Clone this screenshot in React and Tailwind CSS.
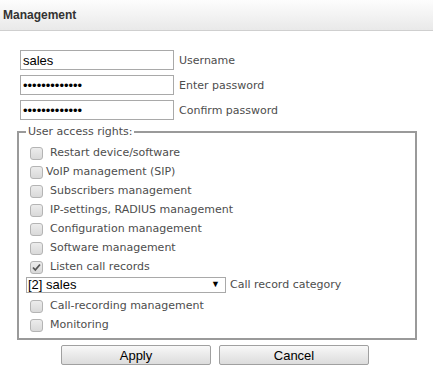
import React from "react";

const Box = ({ checked }) => (
  <span className="relative inline-block w-[13px] h-[13px] shrink-0 rounded-[3px] border border-[#b4b4b4] bg-gradient-to-b from-[#ececec] to-[#d9d9d9]">
    {checked && (
      <svg viewBox="0 0 13 13" className="absolute -left-px -top-px w-[13px] h-[13px]">
        <path d="M3 6.5 L5.3 9 L10 3.5" fill="none" stroke="#555" strokeWidth="1.8" />
      </svg>
    )}
  </span>
);

const Row = ({ label, checked, tight }) => (
  <div className="flex items-center h-[19px] pl-[4px]">
    <Box checked={checked} />
    <span className={tight ? "ml-[3px]" : "ml-[7px]"}>{label}</span>
  </div>
);

const Field = ({ type, value, label }) => (
  <div className="flex items-center h-[20px] mb-[5px]">
    <input
      type={type}
      readOnly
      value={value}
      className="w-[154px] h-[20px] border border-[#a9a9a9] px-[2px] text-[13px] text-black font-['Liberation_Sans',Arial,sans-serif] outline-none"
    />
    <span className="ml-[5px] pt-[3px]">{label}</span>
  </div>
);

export default function App() {
  return (
    <div className="w-[433px] h-[382px] bg-white text-[11px] text-[#4d4d4d] font-['DejaVu_Sans',Verdana,sans-serif]">
      <div className="h-[31px] flex items-center pl-[3px] border-b border-[#cfcfcf] bg-gradient-to-b from-[#fdfdfd] to-[#e9e9e9]">
        <span className="text-[12px] font-bold text-[#333] font-['Liberation_Sans',Arial,sans-serif]">Management</span>
      </div>

      <div className="pl-[20px] pt-[19px]">
        <Field type="text" value="sales" label="Username" />
        <Field type="password" value="sales12345678" label="Enter password" />
        <Field type="password" value="sales12345678" label="Confirm password" />
      </div>

      <fieldset className="ml-[17px] w-[400px] mt-[1px] border-2 border-[#9a9a9a] px-[7px] pt-[6px] pb-[3px]">
        <legend className="px-[2px] leading-[13px]">User access rights:</legend>
        <Row label="Restart device/software" />
        <Row label="VoIP management (SIP)" tight />
        <Row label="Subscribers management" />
        <Row label="IP-settings, RADIUS management" />
        <Row label="Configuration management" />
        <Row label="Software management" />
        <Row label="Listen call records" checked />
        <div className="flex items-start h-[20px]">
          <div className="flex items-center justify-between w-[200px] h-[16px] border border-[#a9a9a9] pl-[1px] pr-[5px] text-[13px] text-black font-['Liberation_Sans',Arial,sans-serif]">
            <span>[2] sales</span>
            <span className="text-[9px]">▼</span>
          </div>
          <span className="ml-[4px] leading-[16px]">Call record category</span>
        </div>
        <Row label="Call-recording management" />
        <Row label="Monitoring" />
      </fieldset>

      <div className="flex gap-[8px] ml-[61px] mt-[5px]">
        <button className="w-[150px] h-[20px] border border-[#a0a0a0] rounded-[2px] bg-gradient-to-b from-[#f8f8f8] to-[#dcdcdc] text-[13px] text-black font-['Liberation_Sans',Arial,sans-serif] leading-none">
          Apply
        </button>
        <button className="w-[150px] h-[20px] border border-[#a0a0a0] rounded-[2px] bg-gradient-to-b from-[#f8f8f8] to-[#dcdcdc] text-[13px] text-black font-['Liberation_Sans',Arial,sans-serif] leading-none">
          Cancel
        </button>
      </div>
    </div>
  );
}
